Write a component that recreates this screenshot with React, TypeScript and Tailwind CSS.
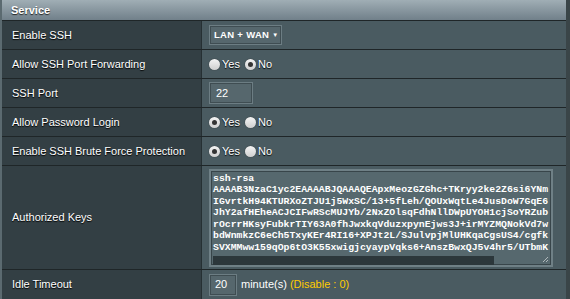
import React from 'react'

const keyLines = [
  'ssh-rsa',
  'AAAAB3NzaC1yc2EAAAABJQAAAQEApxMeozGZGhc+TKryy2ke2Z6si6YNm',
  'IGvrtkH94KTURXoZTJU1j5WxSC/13+5fLeh/QOUxWqtLe4JusDoW7GqE6',
  'JhY2afHEheACJCIFwRScMUJYb/2NxZOlsqFdhNllDWpUYOH1cjSoYRZub',
  'rOcrrHKsyFubkrTIY63A0fhJwxkqVduzxpynEjws3J+irMYZMQNokVd7w',
  'bdWnmkzC6eCh5TxyKEr4RI16+XPJt2L/SJulvpjMlUHKqaCgsUS4/cgfk',
  'SVXMMww159qOp6tO3K55xwigjcyaypVqks6+AnszBwxQJ5v4hr5/UTbmK',
]

const Radio = ({ checked }: { checked: boolean }) => (
  <span className="relative inline-block w-[11px] h-[11px] rounded-full bg-gradient-to-b from-[#f4f4f4] to-[#cfcfcf] shadow-[0_0_1px_#222]">
    {checked && <span className="absolute left-[3px] top-[3px] w-[5px] h-[5px] rounded-full bg-[#333]" />}
  </span>
)

const YesNo = ({ yes }: { yes: boolean }) => (
  <div className="flex items-center gap-[2px] text-[11px] text-white [text-shadow:0_1px_1px_#000]">
    <Radio checked={yes} />
    <span className="mr-[3px]">Yes</span>
    <Radio checked={!yes} />
    <span>No</span>
  </div>
)

const Row = ({ label, h, children }: { label: string; h: string; children: React.ReactNode }) => (
  <div className={`flex ${h} border-t border-[#1f2628] shadow-[inset_0_1px_0_#55666c]`}>
    <div className="w-[200px] shrink-0 flex items-center pl-[10px] bg-[#333f44] border-r border-[#263033] text-[11px] text-white [text-shadow:0_1px_1px_#000]">
      {label}
    </div>
    <div className="flex-1 flex items-center pl-[7px] bg-[#4a5b61]">{children}</div>
  </div>
)

export default function App() {
  return (
    <div className="w-[570px] h-[299px] overflow-hidden bg-[#3a4548] font-['Liberation_Sans',Arial,sans-serif]">
      <div className="w-[566px] h-full border-l-2 border-[#5b6a70] bg-[#3a4548] flex flex-col">
        <div className="h-[20px] shrink-0 flex items-center pl-[9px] bg-gradient-to-b from-[#a0aeb5] to-[#71808a] text-[11px] font-bold text-white [text-shadow:0_1px_1px_#222]">
          Service
        </div>
        <Row label="Enable SSH" h="h-[29px]">
          <div className="h-[20px] pl-[4px] pr-[3px] flex items-center gap-[3px] whitespace-nowrap bg-[#56676d] border border-[#6c7d83] shadow-[inset_0_0_0_1px_#3f4d52] text-[9.5px] tracking-[0.3px] font-bold text-white">
            <span>LAN + WAN</span>
            <span className="text-[6px]">▼</span>
          </div>
        </Row>
        <Row label="Allow SSH Port Forwarding" h="h-[29px]">
          <YesNo yes={false} />
        </Row>
        <Row label="SSH Port" h="h-[29px]">
          <div className="w-[44px] h-[22px] pl-[6px] flex items-center bg-[#56676d] border border-[#6c7d83] shadow-[inset_0_0_0_1px_#3f4d52] text-[11px] text-white">22</div>
        </Row>
        <Row label="Allow Password Login" h="h-[29px]">
          <YesNo yes={true} />
        </Row>
        <Row label="Enable SSH Brute Force Protection" h="h-[29px]">
          <YesNo yes={true} />
        </Row>
        <Row label="Authorized Keys" h="h-[104px]">
          <div className="relative w-[344px] h-[98px] bg-[#56686e] border-2 border-[#6f8086] shadow-[inset_0_0_0_1px_#38454a] pl-[2px] pt-[2px] overflow-hidden">
            <div className="font-['Liberation_Mono','Courier_New',monospace] text-[9.8px] leading-[11.5px] text-white font-bold whitespace-pre">
              {keyLines.map((l) => (
                <div key={l}>{l}</div>
              ))}
            </div>
            <div className="mt-[3px] w-[281px] h-[11px] bg-[#2c373b]" />
            <svg className="absolute right-[2px] bottom-[2px]" width="7" height="7" viewBox="0 0 7 7">
              <path d="M6 1 L1 6 M6 4 L4 6" stroke="#b0b8bb" strokeWidth="1" />
            </svg>
          </div>
        </Row>
        <Row label="Idle Timeout" h="flex-1">
          <div className="flex items-center gap-[4px] text-[11px] text-white">
            <div className="w-[28px] h-[22px] pl-[5px] flex items-center bg-[#56676d] border border-[#6c7d83] shadow-[inset_0_0_0_1px_#3f4d52]">20</div>
            <span>
              minute(s) <span className="text-[#ffcc00]">(Disable : 0)</span>
            </span>
          </div>
        </Row>
      </div>
    </div>
  )
}
